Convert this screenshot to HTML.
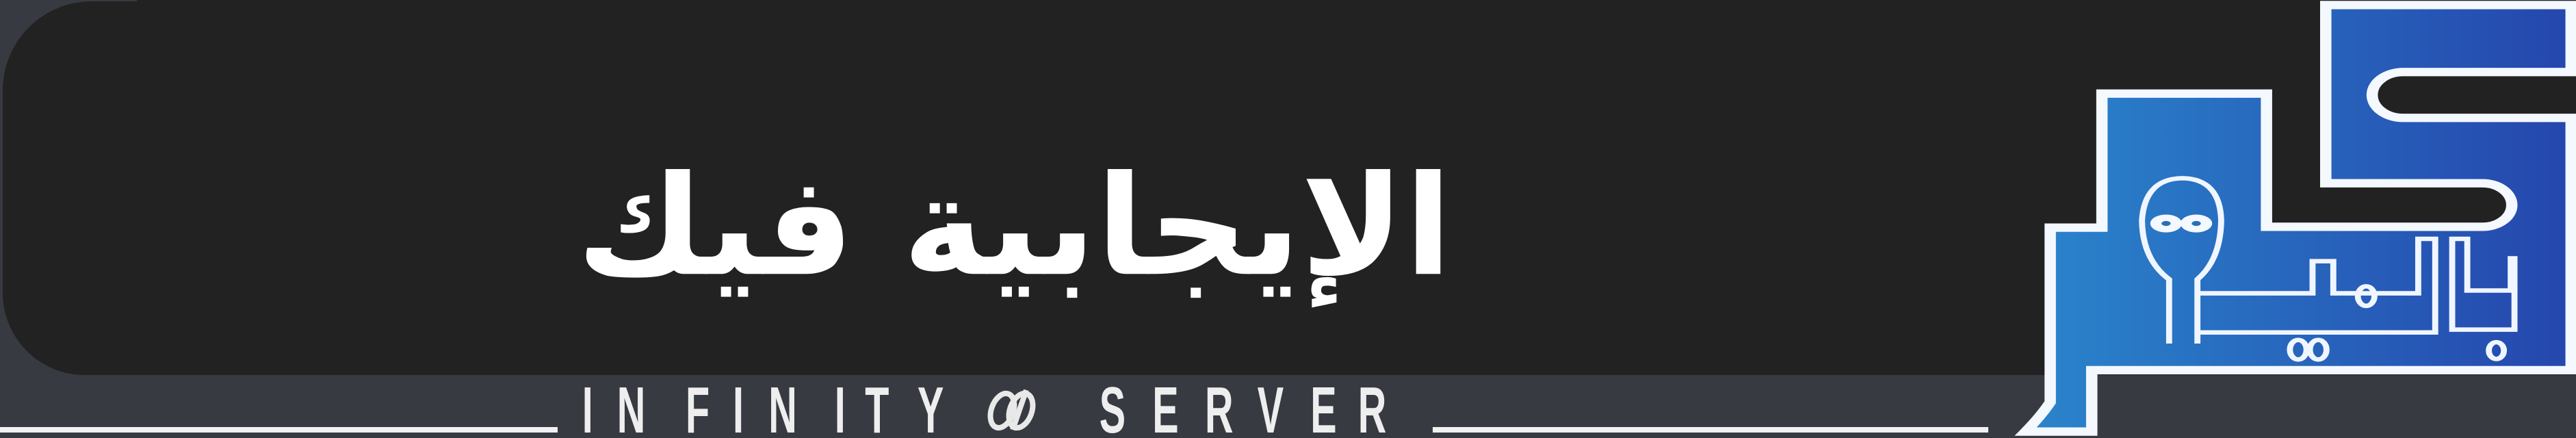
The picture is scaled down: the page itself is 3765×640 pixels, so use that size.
<!DOCTYPE html>
<html><head><meta charset="utf-8"><style>
html,body{margin:0;padding:0;}
body{width:3765px;height:640px;background:#373a41;position:relative;overflow:hidden;}
.panel{position:absolute;left:4px;top:2px;width:3800px;height:546px;background:#222222;border-radius:130px 0 0 120px;}
.topfill{position:absolute;left:200px;top:0;width:3600px;height:60px;background:#222222;}
svg{position:absolute;left:0;top:0;}
.title{position:absolute;left:852px;top:205px;width:1261px;height:260px;text-align:center;direction:rtl;
font-family:"DejaVu Sans",sans-serif;font-weight:bold;font-size:180px;line-height:260px;color:#fff;white-space:nowrap;
transform:scale(1.13,1.12);transform-origin:50% 60%;}
</style></head><body>
<div class="panel"></div>
<div class="topfill"></div>
<div class="title">الإيجابية فيك</div>
<svg width="3765" height="640" viewBox="0 0 3765 640">
  <rect x="0" y="624" width="815" height="8" fill="#f2f2f2"/>
  <rect x="2094" y="624" width="812" height="8" fill="#f2f2f2"/>
  <g transform="scale(0.6,1)" font-family="Liberation Sans, sans-serif" font-weight="bold" font-size="96" fill="#eeeeee">
    <text y="632" x="1418 1503 1670 1785 1872 2033 2107 2235">INFINITY</text>
    <text y="632" x="2678 2807 2935 3063 3192 3308">SERVER</text>
  </g>
  <g fill="none" stroke="#e8e8e8" stroke-width="8">
    <ellipse cx="1465" cy="600" rx="16" ry="26" transform="rotate(20 1465 600)"/>
    <ellipse cx="1492" cy="600" rx="16" ry="26" transform="rotate(20 1492 600)"/>
    <line x1="1480" y1="628" x2="1500" y2="570"/>
  </g>
</svg>
<svg style="left:2900px;top:0" width="865" height="640" viewBox="0 0 1568 1568" preserveAspectRatio="none">
  <defs>
    <linearGradient id="g" x1="0" y1="0" x2="1" y2="0">
      <stop offset="0" stop-color="#2a85cc"/>
      <stop offset="1" stop-color="#2546ad"/>
    </linearGradient>
  </defs>
  <path d="M905,18 L1555,18 L1555,258 L1110,258 A82,82 0 0 0 1110,422 L1555,422 L1555,1325 L285,1325 L285,1545 L110,1545 Q150,1490 175,1440 L175,815 L312,815 L312,335 L748,335 L748,812 L1320,812 A78,78 0 0 0 1320,656 L905,656 Z" fill="url(#g)" stroke="#f4f8ff" stroke-width="30" stroke-linejoin="miter"/>
  <g fill="none" stroke="#f0f6ff" stroke-width="16">
    <path d="M490,1230 L490,1000 Q420,930 418,790 Q425,640 525,638 Q625,640 628,790 Q626,930 565,1000 L565,1230"/>
    <path d="M565,1050 L870,1050 L870,935 L925,935 L925,1050 L1150,1050 L1150,855 L1195,855 L1195,1190 L565,1190"/>
    <path d="M1240,855 L1280,855 L1280,1040 L1395,1040 L1395,925 L1405,925 L1405,1180 L1240,1180 Z"/>
    <ellipse cx="1012" cy="1060" rx="22" ry="35"/>
    <ellipse cx="832" cy="1252" rx="22" ry="35"/>
    <ellipse cx="885" cy="1252" rx="22" ry="35"/>
    <ellipse cx="1357" cy="1255" rx="20" ry="30"/>
  </g>
  <ellipse cx="482" cy="800" rx="42" ry="32" fill="#f4f8ff"/>
  <ellipse cx="562" cy="800" rx="42" ry="32" fill="#f4f8ff"/>
  <ellipse cx="482" cy="800" rx="12" ry="9" fill="#2a70b8"/>
  <ellipse cx="562" cy="800" rx="12" ry="9" fill="#2a70b8"/>
</svg>
</body></html>
